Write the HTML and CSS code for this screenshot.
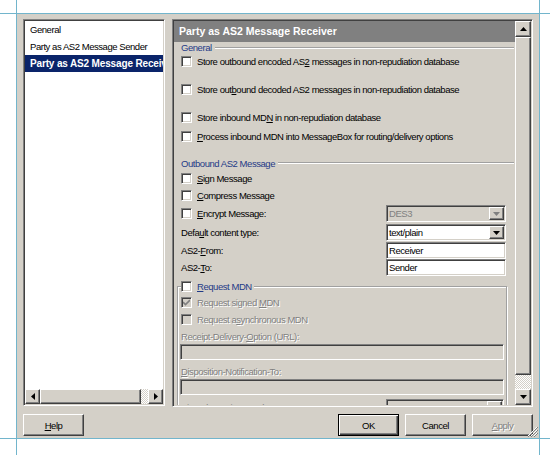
FILE: index.html
```html
<!DOCTYPE html>
<html lang="en">
  <head>
    <title>Party Properties</title>
    <link rel="stylesheet" href="styles.css">
  </head>
  <body>
    <div class="screen">
      <div class="hline top"></div>
      <div class="hline bottom"></div>
      <div class="vline left"></div>
      <div class="vline right"></div>

      <div class="dialog">
        <div class="main">
          <!-- 왼쪽 목록 -->
          <div class="listbox sunken">
            <ul class="items">
              <li>General</li>
              <li>Party as AS2 Message Sender</li>
              <li class="selected">Party as AS2 Message Receiver</li>
            </ul>
            <div class="hscroll">
              <div class="sb-btn raised">
                <svg width="4" height="7"><path d="M4 0V7L0 3.5z" /></svg>
              </div>
              <div class="hthumb raised"></div>
              <div class="track"></div>
              <div class="sb-btn raised">
                <svg width="4" height="7"><path d="M0 0V7L4 3.5z" /></svg>
              </div>
            </div>
          </div>

          <!-- 오른쪽 설정 패널 -->
          <div class="panel sunken">
            <div class="panel-body">
              <div class="panel-title">Party as AS2 Message Receiver</div>
              <div class="content">
                <div class="legend"><span>General</span></div>
                <div class="row">
                  <span class="check"></span>
                  <span>Store outbound encoded AS<u>2</u> messages in non-repudiation database</span>
                </div>
                <div class="row gap">
                  <span class="check"></span>
                  <span>Store out<u>b</u>ound decoded AS2 messages in non-repudiation database</span>
                </div>
                <div class="row gap">
                  <span class="check"></span>
                  <span>Store inbound MD<u>N</u> in non-repudiation database</span>
                </div>
                <div class="row near">
                  <span class="check"></span>
                  <span><u>P</u>rocess inbound MDN into MessageBox for routing/delivery options</span>
                </div>

                <div class="legend second"><span>Outbound AS2 Message</span></div>
                <div class="row first">
                  <span class="check"></span>
                  <span><u>S</u>ign Message</span>
                </div>
                <div class="row">
                  <span class="check"></span>
                  <span><u>C</u>ompress Message</span>
                </div>
                <div class="row tall">
                  <span class="check"></span>
                  <span><u>E</u>ncrypt Message:</span>
                  <div class="select disabled">
                    <span class="value">DES3</span>
                    <span class="drop raised">
                      <svg width="7" height="4"><path d="M0 0H7L3.5 4z" /></svg>
                    </span>
                  </div>
                </div>
                <div class="row tall">
                  <span>Defa<u>u</u>lt content type:</span>
                  <div class="select">
                    <span class="value">text/plain</span>
                    <span class="drop raised">
                      <svg width="7" height="4"><path d="M0 0H7L3.5 4z" /></svg>
                    </span>
                  </div>
                </div>
                <div class="row">
                  <span>AS2-<u>F</u>rom:</span>
                  <div class="field">Receiver</div>
                </div>
                <div class="row">
                  <span>AS2-<u>T</u>o:</span>
                  <div class="field">Sender</div>
                </div>

                <fieldset class="group">
                  <legend>
                    <span class="check"></span>
                    <span class="caption"><u>R</u>equest MDN</span>
                  </legend>
                  <div class="row off">
                    <span class="check checked">
                      <svg width="7" height="7"><path d="M0 3L2.5 5.5L7 1" /></svg>
                    </span>
                    <span>Request signed <u>M</u>DN</span>
                  </div>
                  <div class="row off">
                    <span class="check"></span>
                    <span>Request a<u>s</u>ynchronous MDN</span>
                  </div>
                  <div class="row off label">
                    <span>Receipt-Delivery-<u>O</u>ption (URL):</span>
                  </div>
                  <div class="field wide"></div>
                  <div class="row off label spaced">
                    <span><u>D</u>isposition-Notification-To:</span>
                  </div>
                  <div class="field wide"></div>
                  <div class="row off label micalg">
                    <span>Si<u>g</u>ned Receipt MICalg:</span>
                    <div class="select disabled">
                      <span class="value">MD5</span>
                      <span class="drop raised">
                        <svg width="7" height="4"><path d="M0 0H7L3.5 4z" /></svg>
                      </span>
                    </div>
                  </div>
                </fieldset>
              </div>
            </div>

            <div class="vscroll">
              <div class="sb-btn raised">
                <svg width="7" height="4"><path d="M3.5 0L7 4H0z" /></svg>
              </div>
              <div class="vthumb raised"></div>
              <div class="track"></div>
              <div class="sb-btn raised">
                <svg width="7" height="4"><path d="M0 0H7L3.5 4z" /></svg>
              </div>
            </div>
          </div>
        </div>

        <div class="buttons">
          <button class="btn raised"><u>H</u>elp</button>
          <button class="btn raised default">OK</button>
          <button class="btn raised">Cancel</button>
          <button class="btn raised off"><u>A</u>pply</button>
        </div>

        <svg class="grip" width="11" height="11">
          <path d="M10 1L1 10M10 4L4 10M10 7L7 10" stroke="#fff" />
          <path d="M11 1L1 11M11 4L4 11M11 7L7 11" stroke="#808080" />
        </svg>
      </div>
    </div>
  </body>
</html>
```

FILE: styles.css
```css
/* 화면 */
body {
  margin: 0;
  background-color: #fff;
}

.screen {
  display: grid;
  grid-template-columns: 16px 1px 522px 1px 1fr;
  grid-template-rows: 13px 1px 424px 1px 1fr;
  height: 455px;
}

.hline {
  grid-column: 1 / -1;
  background-color: #72b5cc;
}

.hline.top {
  grid-row: 2;
}

.hline.bottom {
  grid-row: 4;
}

.vline {
  grid-row: 1 / -1;
  background-color: #72b5cc;
}

.vline.left {
  grid-column: 2;
}

.vline.right {
  grid-column: 4;
}

/* 대화상자 */
.dialog {
  grid-column: 3;
  grid-row: 3;
  position: relative;
  background-color: #d4d0c8;
  padding: 5px 6px 0 6px;
  font-family: "Liberation Sans", Arial, sans-serif;
  font-size: 9.5px;
  letter-spacing: -0.45px;
  color: #000;
}

.sunken {
  box-sizing: border-box;
  border: 1px solid;
  border-color: #808080 #fff #fff #808080;
  box-shadow: inset 1px 1px 0 #404040, inset -1px -1px 0 #d4d0c8;
}

.raised {
  box-sizing: border-box;
  border: 1px solid;
  border-color: #fff #404040 #404040 #fff;
  box-shadow: inset -1px -1px 0 #808080;
  background-color: #d4d0c8;
}

.main {
  display: flex;
  gap: 7px;
  height: 388px;
}

/* 목록 */
.listbox {
  width: 142px;
  height: 387px;
  background-color: #fff;
  display: flex;
  flex-direction: column;
  padding: 1px;
}

.items {
  flex: 1;
  list-style: none;
  margin: 0;
  padding: 0;
  overflow: hidden;
}

.items li {
  height: 17px;
  line-height: 17px;
  padding-left: 5px;
  white-space: nowrap;
  overflow: hidden;
}

.items li.selected {
  background-color: #0a246a;
  color: #fff;
  font-size: 10px;
  font-weight: bold;
  letter-spacing: -0.15px;
}

.hscroll {
  display: flex;
  height: 15px;
}

.sb-btn {
  width: 15px;
  height: 15px;
  display: flex;
  justify-content: center;
  align-items: center;
  flex-shrink: 0;
}

.hthumb {
  width: 101px;
}

.track {
  flex: 1;
  background: repeating-conic-gradient(#fff 0 25%, #d4d0c8 0 50%) 0 0 / 2px 2px;
}

/* 패널 */
.panel {
  width: 362px;
  height: 388px;
  display: flex;
  padding: 1px;
}

.panel-body {
  flex: 1;
  overflow: hidden;
}

.panel-title {
  height: 21px;
  line-height: 21px;
  padding-left: 5px;
  background-color: #808080;
  color: #fff;
  font-size: 10.5px;
  font-weight: bold;
  letter-spacing: 0;
}

.content {
  padding: 0 9px 0 7px;
}

.legend {
  display: flex;
  align-items: center;
  gap: 3px;
  height: 11px;
  margin-right: -8px;
  color: #1f3a87;
}

.legend::after {
  content: "";
  flex: 1;
  border-top: 1px solid #a0a0a0;
  border-bottom: 1px solid #fff;
}

.legend.second {
  margin-top: 12px;
  height: 12px;
}

.row {
  display: flex;
  align-items: center;
  height: 17px;
  white-space: nowrap;
}

.row.gap {
  margin-top: 11px;
}

.row.near {
  margin-top: 2px;
}

.row.first {
  margin-top: 1px;
}

.row.tall {
  height: 19px;
}

.check {
  width: 11px;
  height: 11px;
  margin-right: 5px;
  flex-shrink: 0;
  box-sizing: border-box;
  border: 1px solid;
  border-color: #808080 #fff #fff #808080;
  box-shadow: inset 1px 1px 0 #404040, inset -1px -1px 0 #d4d0c8;
  background-color: #fff;
  display: flex;
  justify-content: center;
  align-items: center;
}

.check svg path {
  fill: none;
  stroke: #808080;
  stroke-width: 1.6;
}

.select,
.field {
  margin-left: auto;
  width: 120px;
  height: 17px;
  box-sizing: border-box;
  border: 1px solid;
  border-color: #808080 #fff #fff #808080;
  box-shadow: inset 1px 1px 0 #404040, inset -1px -1px 0 #d4d0c8;
  background-color: #fff;
  padding: 1px 1px 1px 2px;
  display: flex;
  align-items: center;
}

.select .value {
  flex: 1;
}

.drop {
  width: 15px;
  height: 13px;
  display: flex;
  justify-content: center;
  align-items: center;
}

.select.disabled {
  background-color: #d4d0c8;
  color: #808080;
}

.select.disabled .drop svg {
  fill: #808080;
}

/* MDN 그룹 */
.group {
  margin: 2px -1px 0 -4px;
  padding: 0 2px;
  border: 1px solid #a0a0a0;
  box-shadow: inset 1px 1px 0 #fff, 1px 1px 0 #fff;
}

.group legend {
  display: flex;
  align-items: center;
  height: 16px;
  padding: 0 2px 0 0;
  margin-left: 1px;
  background-color: #d4d0c8;
}

.caption {
  color: #1f3a87;
}

.row.off {
  color: #808080;
  text-shadow: 1px 1px 0 #fff;
  padding-left: 1px;
}

.row.off .check {
  background-color: #d4d0c8;
}

.row.label {
  height: 16px;
}

.row.spaced {
  margin-top: 3px;
}

.row.micalg {
  margin-top: 4px;
}

.row.micalg .select {
  width: 118px;
  text-shadow: none;
}

.field.wide {
  width: auto;
  height: 16px;
  margin: 0;
  background-color: #d4d0c8;
}

/* 세로 스크롤 */
.vscroll {
  width: 16px;
  display: flex;
  flex-direction: column;
}

.vscroll .sb-btn {
  width: 16px;
  height: 16px;
}

.vthumb {
  height: 338px;
}

/* 버튼 */
.buttons {
  display: flex;
  gap: 6px;
  margin-top: 7px;
}

.btn {
  width: 61px;
  height: 22px;
  padding: 0;
  font: inherit;
  letter-spacing: inherit;
  color: #000;
}

.btn.default {
  margin-left: auto;
  border: 1px solid #000;
  box-shadow: inset 1px 1px 0 #fff, inset -1px -1px 0 #404040, inset -2px -2px 0 #808080;
}

.btn.off {
  color: #808080;
  text-shadow: 1px 1px 0 #fff;
}

.grip {
  position: absolute;
  right: 1px;
  bottom: 1px;
}
```
